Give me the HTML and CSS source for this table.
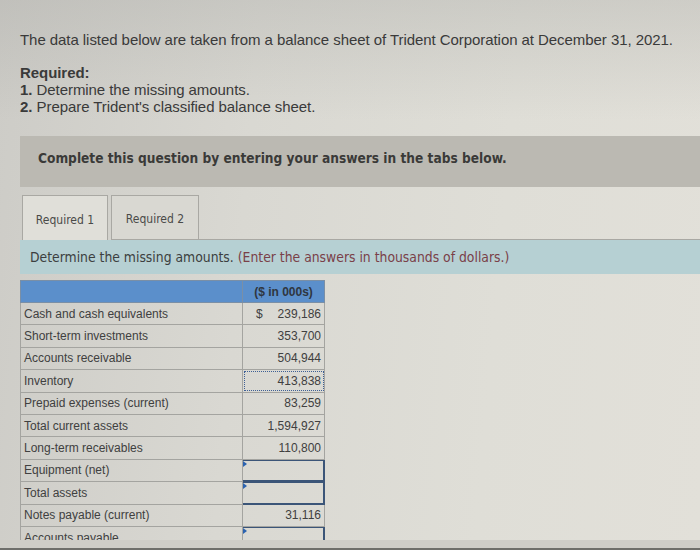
FILE: index.html
```html
<!DOCTYPE html>
<html lang="en">
<head>
<meta charset="utf-8">
<title>Trident Corporation</title>
<link rel="stylesheet" href="styles.css">
</head>
<body>
<div class="screen">
  <div class="intro">
    <p class="lead">The data listed below are taken from a balance sheet of Trident Corporation at December 31, 2021.</p>
    <p class="req-title">Required:</p>
    <p class="req-item"><b>1.</b> Determine the missing amounts.</p>
    <p class="req-item"><b>2.</b> Prepare Trident's classified balance sheet.</p>
  </div>

  <div class="notice">Complete this question by entering your answers in the tabs below.</div>

  <div class="tabs">
    <div class="tab active">Required 1</div>
    <div class="tab">Required 2</div>
    <div class="tab-rest"></div>
  </div>

  <div class="instruction">Determine the missing amounts. <span class="hint">(Enter the answers in thousands of dollars.)</span></div>

  <table class="sheet">
    <thead>
      <tr><th class="label-head"></th><th class="value-head">($ in 000s)</th></tr>
    </thead>
    <tbody>
      <tr><td class="label">Cash and cash equivalents</td><td class="value"><span class="cur">$</span>239,186</td></tr>
      <tr><td class="label">Short-term investments</td><td class="value">353,700</td></tr>
      <tr><td class="label">Accounts receivable</td><td class="value">504,944</td></tr>
      <tr><td class="label">Inventory</td><td class="value focus">413,838</td></tr>
      <tr><td class="label">Prepaid expenses (current)</td><td class="value">83,259</td></tr>
      <tr><td class="label">Total current assets</td><td class="value">1,594,927</td></tr>
      <tr><td class="label">Long-term receivables</td><td class="value">110,800</td></tr>
      <tr><td class="label">Equipment (net)</td><td class="value input"><span class="flag"></span></td></tr>
      <tr><td class="label">Total assets</td><td class="value input"><span class="flag"></span></td></tr>
      <tr><td class="label">Notes payable (current)</td><td class="value">31,116</td></tr>
      <tr><td class="label">Accounts payable</td><td class="value input"><span class="flag"></span></td></tr>
    </tbody>
  </table>
</div>
<div class="bezel"></div>
</body>
</html>
```

FILE: styles.css
```css
html, body {
  margin: 0;
  padding: 0;
}

body {
  width: 700px;
  height: 550px;
  overflow: hidden;
  background: #6f6e6a;
}

.screen {
  height: 540px;
  overflow: hidden;
  padding-left: 20px;
  background:
    linear-gradient(180deg, rgba(170, 170, 166, 0.35) 0px, rgba(170, 170, 166, 0) 120px),
    linear-gradient(95deg, #cdccc7 0%, #d9d8d2 35%, #dfded7 70%, #e2e0d9 100%);
  color: #3b3b3b;
}

.bezel {
  height: 8px;
  background: #cfcdc7;
}

.intro {
  padding-top: 30px;
  font-family: "Liberation Sans", Arial, sans-serif;
  font-size: 15px;
  letter-spacing: -0.06px;
  color: #3a3a3a;
}

.intro p {
  margin: 0;
}

.lead {
  line-height: 20px;
  margin-bottom: 14px !important;
}

.req-title {
  font-weight: bold;
  line-height: 17px;
}

.req-item {
  line-height: 17px;
}

.notice {
  margin-top: 21px;
  height: 51px;
  box-sizing: border-box;
  padding: 14px 0 0 18px;
  background: #bbb9b2;
  font-family: "DejaVu Sans Condensed", "DejaVu Sans", sans-serif;
  font-stretch: condensed;
  font-weight: bold;
  font-size: 13.6px;
  color: #3a3a38;
}

.tabs {
  display: flex;
  margin-top: 8px;
  height: 45px;
}

.tab {
  box-sizing: border-box;
  border: 1px solid #a9a8a3;
  display: flex;
  align-items: center;
  justify-content: center;
  padding-top: 3px;
  font-family: "DejaVu Sans Condensed", "DejaVu Sans", sans-serif;
  font-stretch: condensed;
  font-size: 12px;
  color: #4a4a48;
}

.tab:first-child {
  margin-left: 2px;
  width: 86px;
  border-bottom: none;
  background: #e0dfd9;
}

.tab:nth-child(2) {
  margin-left: 3px;
  width: 88px;
  background: #d9d8d2;
}

.tab-rest {
  flex: 1;
  border-bottom: 1px solid #a9a8a3;
}

.instruction {
  height: 34px;
  box-sizing: border-box;
  padding: 9px 0 0 10px;
  background: #b6d0d3;
  font-family: "DejaVu Sans Condensed", "DejaVu Sans", sans-serif;
  font-stretch: condensed;
  font-size: 13.8px;
  color: #3c3f40;
}

.hint {
  color: #7a4048;
}

.sheet {
  margin-top: 6px;
  border-collapse: collapse;
  font-family: "Liberation Sans", Arial, sans-serif;
  font-size: 12px;
  color: #404040;
}

.sheet th {
  height: 21px;
  padding: 0;
  background: #5b8fcb;
  border: 1px solid #7a8fa6;
  font-weight: bold;
  color: #2f3640;
}

.label-head {
  width: 221px;
}

.value-head {
  width: 81px;
  font-size: 12px;
}

.sheet td {
  height: 21.4px;
  padding: 0 3px;
  border: 1px solid #a4a4a0;
  box-sizing: content-box;
  white-space: nowrap;
}

.label {
  text-align: left;
}

.value {
  position: relative;
  text-align: right;
}

.cur {
  float: left;
  margin-left: 10px;
}

.focus {
  outline: 1px dotted #3e5f94;
  outline-offset: -2px;
}

.sheet td.input {
  border-color: #3b5578;
  box-shadow: inset 0 1px 0 #3b5578, inset -1px 0 0 #3b5578, inset 0 -1px 0 #3b5578;
}

.flag {
  position: absolute;
  left: 0;
  top: 1px;
  width: 0;
  height: 0;
  border-left: 4px solid #2a62b0;
  border-top: 3px solid transparent;
  border-bottom: 3px solid transparent;
}
```
